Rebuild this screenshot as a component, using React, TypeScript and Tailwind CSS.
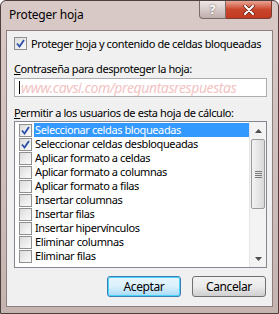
import React from 'react';

const items = [
  { label: 'Seleccionar celdas bloqueadas', checked: true },
  { label: 'Seleccionar celdas desbloqueadas', checked: true },
  { label: 'Aplicar formato a celdas', checked: false },
  { label: 'Aplicar formato a columnas', checked: false },
  { label: 'Aplicar formato a filas', checked: false },
  { label: 'Insertar columnas', checked: false },
  { label: 'Insertar filas', checked: false },
  { label: 'Insertar hipervínculos', checked: false },
  { label: 'Eliminar columnas', checked: false },
  { label: 'Eliminar filas', checked: false },
];

const Check = ({ checked }: { checked: boolean }) => (
  <span className="flex h-[13px] w-[13px] shrink-0 items-center justify-center border border-[#8f8f8f] bg-gradient-to-br from-[#dcdcdc] to-[#fbfbfb]">
    {checked && (
      <svg width="9" height="9" viewBox="0 0 9 9">
        <path d="M1 4.5 L3.5 7.5 L8 1" fill="none" stroke="#2a4fa8" strokeWidth="1.8" />
      </svg>
    )}
  </span>
);

const App = () => {
  return (
    <div className="h-[314px] w-[279px] overflow-hidden whitespace-nowrap font-['Noto_Sans',sans-serif] text-[11px] leading-[14px] tracking-[-0.4px] text-black">
      <div className="flex h-full flex-col rounded-t-[6px] border border-[#4d3f3d] bg-gradient-to-b from-[#d9cac8] to-[#c5b3b0] px-[5px] pb-[6px]">
        {/* Title bar */}
        <div className="flex h-[29px] shrink-0 items-start">
          <span className="pl-[3px] pt-[7px] text-[12px] tracking-[-0.2px]">Proteger hoja</span>
          <div className="ml-auto mr-[1px] flex">
            <div className="flex h-[18px] w-[27px] items-center justify-center rounded-bl-[4px] border border-t-0 border-[#7a6a68] bg-gradient-to-b from-[#efe8e7] via-[#d8cbc9] to-[#bfaeab] text-[12px] font-bold text-white [text-shadow:0_0_2px_#555]">
              ?
            </div>
            <div className="flex h-[18px] w-[46px] items-center justify-center rounded-br-[4px] border border-l-0 border-t-0 border-[#7a3b30] bg-gradient-to-b from-[#e8a493] via-[#c9452c] to-[#c23a20]">
              <svg width="12" height="10" viewBox="0 0 12 10">
                <path d="M2 1 L10 9 M10 1 L2 9" stroke="#5a2218" strokeWidth="3.4" strokeLinecap="round" />
                <path d="M2 1 L10 9 M10 1 L2 9" stroke="#ffffff" strokeWidth="2" strokeLinecap="round" />
              </svg>
            </div>
          </div>
        </div>

        {/* Client area */}
        <div className="flex flex-1 flex-col border border-[#8d7f7d] bg-[#f0f0f0] pl-[7px] pr-[5px] pt-[6px]">
          <label className="flex h-[13px] items-center gap-[4px]">
            <Check checked />
            <span>
              Proteger <span className="underline">h</span>oja y contenido de celdas bloqueadas
            </span>
          </label>

          <div className="mt-[12px]">
            <span className="underline">C</span>ontraseña para desproteger la hoja:
          </div>
          <div className="mt-[2px] flex h-[19px] items-center overflow-hidden border border-[#abadb3] bg-white pl-[4px]">
            <span className="mr-[1px] h-[13px] w-px shrink-0 bg-black" />
            <span className="text-[14px] italic leading-none tracking-[-0.4px] text-[#f3c3c3]">
              www.cavsi.com/preguntasrespuestas
            </span>
          </div>

          <div className="mt-[9px]">
            <span className="underline">P</span>ermitir a los usuarios de esta hoja de cálculo:
          </div>
          <div className="mt-[1px] flex h-[147px] border border-[#828790] bg-white">
            <div className="flex-1 pl-[2px] pt-[1px]">
              {items.map((it, i) => (
                <div key={it.label} className="flex h-[14px] items-center">
                  <span className="px-[2px]">
                    <Check checked={it.checked} />
                  </span>
                  <span
                    className={`flex h-[14px] flex-1 items-center pl-[1px] ${
                      i === 0 ? 'bg-[#3399ff] text-white' : ''
                    }`}
                  >
                    {it.label}
                  </span>
                </div>
              ))}
            </div>
            {/* Scrollbar */}
            <div className="flex w-[17px] flex-col border-l border-[#e6e6e6] bg-[#f3f3f3]">
              <div className="flex h-[17px] items-center justify-center">
                <svg width="7" height="4" viewBox="0 0 7 4">
                  <path d="M0 4 L3.5 0 L7 4 Z" fill="#4d4d4d" />
                </svg>
              </div>
              <div className="mx-[1px] flex h-[70px] items-center justify-center rounded-[2px] border border-[#9b9b9b] bg-gradient-to-r from-[#f3f3f3] to-[#d9d9d9]">
                <div className="flex flex-col gap-[1px]">
                  <span className="h-px w-[7px] bg-[#7a7a7a]" />
                  <span className="h-px w-[7px] bg-[#7a7a7a]" />
                  <span className="h-px w-[7px] bg-[#7a7a7a]" />
                  <span className="h-px w-[7px] bg-[#7a7a7a]" />
                </div>
              </div>
              <div className="mt-auto flex h-[17px] items-center justify-center">
                <svg width="7" height="4" viewBox="0 0 7 4">
                  <path d="M0 0 L3.5 4 L7 0 Z" fill="#4d4d4d" />
                </svg>
              </div>
            </div>
          </div>

          <div className="mt-[8px] flex justify-end gap-[11px] pr-[1px]">
            <button className="h-[21px] w-[74px] rounded-[3px] border border-[#3c7fb1] bg-gradient-to-b from-[#eaf6fd] via-[#d9f0fc] to-[#a7d9f5] text-[12px] shadow-[inset_0_0_0_1px_#48d3fb]">
              Aceptar
            </button>
            <button className="h-[21px] w-[74px] rounded-[3px] border border-[#707070] bg-gradient-to-b from-[#f2f2f2] via-[#ebebeb] to-[#cfcfcf] text-[12px]">
              Cancelar
            </button>
          </div>
        </div>
      </div>
    </div>
  );
};

export default App;
